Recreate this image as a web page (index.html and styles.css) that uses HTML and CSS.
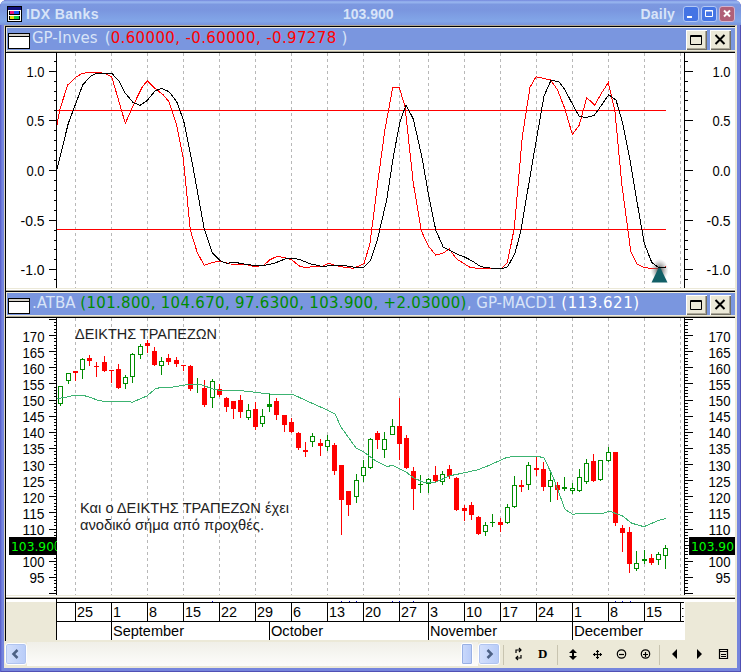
FILE: index.html
```
<!DOCTYPE html>
<html lang="el">
<head>
  <meta charset="UTF-8" />
  <title>IDX Banks</title>
  <link rel="stylesheet" href="styles.css">
</head>
<body>

  <div class="window">
    <header class="titlebar">
      <svg class="app-icon" width="15" height="16" viewBox="0 0 15 16" shape-rendering="crispEdges">
        <path d="M0 0h15v16H0z" fill="#000" />
        <path d="M1 1h13v3H1z" fill="#10107c" />
        <path d="M1 4h13v11H1z" fill="#fff" />
        <path d="M2 5h11v4H2zM2 10h11v4H2z" fill="#000" />
        <path d="M3 5h4v3H3z" fill="#e8107c" />
        <path d="M7 5h5v3H7z" fill="#1a50f0" />
        <path d="M3 10h4v3H3z" fill="#e8e010" />
        <path d="M7 10h5v3H7z" fill="#10d040" />
      </svg>
      <span class="title-name">IDX Banks</span>
      <span class="title-price">103.900</span>
      <span class="title-period">Daily</span>
      <div class="title-buttons">
        <svg width="16" height="16"><rect x=".5" y=".5" width="15" height="15" rx="2.5" /><path d="M4 11h5" stroke-width="2" /></svg>
        <svg width="16" height="16"><rect x=".5" y=".5" width="15" height="15" rx="2.5" /><path d="M4.5 4.5h7v6h-7zM4 5h8" /></svg>
        <svg class="btn-close" width="16" height="16"><rect x=".5" y=".5" width="15" height="15" rx="2.5" /><path d="M5 4.5l6 6M11 4.5l-6 6" stroke-width="2" /></svg>
      </div>
    </header>

    <main class="inner">
      <div class="pane-head">
        <i class="pane-icon"></i>
        <span class="pane-title t1"><span class="w68">GP-Inves</span> (<b class="red">0.60000, -0.60000, -0.97278</b> )</span>
        <div class="pane-buttons">
          <svg width="21" height="20"><path d="M4.5 5.5h11v9h-11zM4 6.5h12" /></svg>
          <svg width="21" height="20"><path d="M5.500 5l9 9M14.500 5l-9 9" stroke-width="2" /></svg>
        </div>
      </div>
      <svg id="oscillator" class="plot" width="729" height="235" viewBox="6 53 729 235"></svg>
      <div class="splitter"></div>

      <div class="pane-head">
        <i class="pane-icon"></i>
        <span class="pane-title t2">.ATBA <b class="green">(101.800, 104.670, 97.6300, 103.900, +2.03000)</b>, <span class="macd">GP-MACD1 <b class="white">(113.621)</b></span></span>
        <div class="pane-buttons">
          <svg width="21" height="20"><path d="M4.5 5.5h11v9h-11zM4 6.5h12" /></svg>
          <svg width="21" height="20"><path d="M5.500 5l9 9M14.500 5l-9 9" stroke-width="2" /></svg>
        </div>
      </div>
      <svg id="price" class="plot" width="729" height="277" viewBox="6 318 729 277"></svg>
      <div class="splitter"></div>

      <svg id="dates" class="dates" width="729" height="42" viewBox="6 599 729 42"></svg>
    </main>

    <footer class="toolbar">
      <svg class="scroll-btn" width="22" height="22"><path d="M11.500 6l-4 4 4 4" /></svg>
      <div class="track"><i class="thumb"></i></div>
      <svg class="scroll-btn" width="22" height="22"><path d="M8.500 6l4 4-4 4" /></svg>
      <svg class="tools" width="237" height="26" viewBox="500 641 237 26">
        <path class="sep" d="M503.500 645v20M557.500 645v20M659.500 645v20" />
        <path class="line" d="M516 653v-3h5M519 648l2 2-2 2M521 655v3h-5M518 656l-2 2 2 2" />
        <text x="538" y="658">D</text>
        <path d="M573 649l4 4h-3v3h3l-4 4-4-4h3v-3h-3z" />
        <path class="line" d="M593 654.500h9M597.500 650v9M596 651.500h3M596 657.500h3M594.500 653v3M600.500 653v3" />
        <circle class="line" cx="621.500" cy="654" r="4.200" /><path class="line" d="M619 654.500h5" />
        <circle class="line" cx="645.500" cy="654" r="4.200" /><path class="line" d="M643 654.500h5M645.500 652v5" />
        <path d="M677 649v10l-5-5zM697 649v10l5-5z" />
        <path class="line" d="M719.500 649.500h8v9h-8zM719 651.500h9M721 654.500h5M721 656.500h5" />
      </svg>
    </footer>
  </div>

  <script src="chart.js"></script>
</body>
</html>
```
FILE: styles.css
```
* {
  margin: 0;
  padding: 0;
  box-sizing: border-box;
}

body {
  background: #fff;
  font-family: "Liberation Sans", Arial, sans-serif;
  overflow: hidden;
}

svg {
  display: block;
  flex: none;
}

.window {
  width: 741px;
  height: 672px;
  display: flex;
  flex-direction: column;
  padding: 0 4px 4px;
  background: #7585dd;
  border-radius: 7px 7px 0 0;
  box-shadow: inset 1px 0 #5b62cc, inset -1px -1px #5050b4, inset 2px 0 #6b78d8;
  overflow: hidden;
}

/* title bar */
.titlebar {
  height: 25px;
  flex: none;
  display: flex;
  align-items: center;
  margin: 0 -4px;
  padding: 3px 6px 0 7px;
  background: linear-gradient(#7386dc 0, #9ab8f0 8%, #7c98e0 18%, #7a96df 40%, #82a6e8 85%, #7a94dc 100%);
  color: #d8e4f8;
  font-size: 14px;
  font-weight: bold;
}

.title-name {
  width: 312px;
  margin-left: 4px;
  letter-spacing: .4px;
}

.title-price {
  flex: 1;
  margin-left: 5px;
}

.title-period {
  margin-right: 8px;
  letter-spacing: .2px;
}

.title-buttons {
  display: flex;
  gap: 2px;
}

.title-buttons rect {
  fill: #4474e4;
  stroke: #b4c8f4;
}

.title-buttons path {
  fill: none;
  stroke: #fff;
}

.title-buttons .btn-close rect {
  fill: #b06078;
  stroke: #d0b4d0;
}

/* chart area */
.inner {
  height: 616px;
  flex: none;
  border-top: 1px solid #aca899;
  border-left: 1px solid #d8d4c4;
  border-right: 2px solid #ece9d8;
  padding-left: 1px;
  background: #000;
}

.pane-head {
  height: 27px;
  display: flex;
  align-items: center;
  border-top: 1px solid #000;
  border-bottom: 1px solid #000;
  padding: 0 4px 0 1px;
  background: #7a96df;
  box-shadow: inset 0 1px #ece9d8, inset 1px 0 #ece9d8, inset 0 -1px #aca899, inset 0 -2px #ece9d8;
}

.pane-icon {
  width: 22px;
  height: 16px;
  flex: none;
  margin: 3px 2px 0 1px;
  border: 1px solid #000;
  background: linear-gradient(#d4d0c8 2px, #000 2px, #000 3px, #fff 3px);
}

.pane-title {
  flex: 1;
  font-family: "DejaVu Sans", Verdana, sans-serif;
  font-size: 15px;
  line-height: 20px;
  padding-bottom: 3px;
  white-space: nowrap;
  color: #d8e4f8;
}

.pane-title b {
  font-weight: normal;
}

.w68 {
  display: inline-block;
  width: 68px;
}

.t1 .red {
  color: #f00;
  letter-spacing: .37px;
}

.t2 .green {
  color: #008c00;
  letter-spacing: .3px;
}

.t2 .white {
  color: #fff;
  letter-spacing: .5px;
}

.pane-buttons {
  display: flex;
  gap: 3px;
}

.pane-buttons svg {
  background: #ece9d8;
  box-shadow: inset 1px 1px #fff, inset -1px -1px #716f64, inset -2px -2px #aca899;
}

.pane-buttons path {
  fill: none;
  stroke: #000;
}

.plot {
  background: #fff;
}

.splitter {
  height: 3px;
  background: linear-gradient(#ece9d8 1px, #fff 1px, #fff 2px, #aca899 2px);
}

.inner > .splitter:last-of-type {
  height: 4px;
  border-bottom: 1px solid #000;
}

/* svg drawing */
.axis,
.grid,
.osc,
.signal,
.level,
.ma,
.candle {
  fill: none;
  stroke-width: 1;
  shape-rendering: crispEdges;
}

.axis {
  stroke: #000;
}

.grid {
  stroke: #b8b8b8;
  stroke-dasharray: 3 3;
}

.osc,
.level {
  stroke: #f00;
}

.signal {
  stroke: #000;
}

.ma {
  stroke: #3cb371;
}

.candle.up {
  stroke: #008c00;
  fill: #fff;
}

.candle.down {
  stroke: #f00;
  fill: #f00;
}

.candle.flat {
  fill: #008c00;
}

.plot text,
.dates text {
  font-size: 15px;
  fill: #000;
}

.plot .note {
  font-size: 14px;
  fill: #222;
}

.plot .last {
  font-family: "DejaVu Sans", Verdana, sans-serif;
  font-size: 13px;
  fill: #0f0;
}

/* bottom toolbar */
.toolbar {
  height: 27px;
  flex: none;
  display: flex;
  align-items: center;
  padding: 0 0 1px 1px;
  background: #ece9d8;
}

.scroll-btn {
  border: 1px solid #fff;
  border-radius: 3px;
  background: linear-gradient(90deg, #d4e0fc, #b8ccf8);
  box-shadow: inset 0 0 0 1px #b0c4f0;
}

.scroll-btn path {
  fill: none;
  stroke: #4d6185;
  stroke-width: 2.5;
}

.track {
  flex: 1;
  height: 24px;
  display: flex;
  justify-content: flex-end;
  align-items: center;
  padding-right: 5px;
  background: linear-gradient(#f0efe8, #fdfdfb);
}

.thumb {
  width: 12px;
  height: 22px;
  border: 1px solid #fff;
  border-radius: 2px;
  background: linear-gradient(90deg, #cbdafc, #b6caf8);
  box-shadow: inset 0 0 0 1px #98b0e4;
}

.tools text {
  font-family: "Liberation Serif", serif;
  font-size: 13px;
  font-weight: bold;
}

.tools .line {
  fill: none;
  stroke: #000;
  stroke-width: 1.2;
}

.tools .sep {
  stroke: #c8c4b0;
}
```
FILE: chart.js
```
const NS = 'http://www.w3.org/2000/svg';

function add(svg, tag, attrs, text) {
  const el = document.createElementNS(NS, tag);
  for (const key in attrs) el.setAttribute(key, attrs[key]);
  if (text !== undefined) el.textContent = text;
  svg.appendChild(el);
  return el;
}

// text stretched to a fixed width
function label(svg, x, y, width, text, cls) {
  const attrs = { x, y, textLength: width, lengthAdjust: 'spacingAndGlyphs' };
  if (cls) attrs.class = cls;
  add(svg, 'text', attrs, text);
}

const oscillator = document.getElementById('oscillator');
const price = document.getElementById('price');
const dates = document.getElementById('dates');

const weeks = [
  [75, '25'], [111, '1'], [147, '8'], [183, '15'], [219, '22'], [255, '29'],
  [291, '6'], [327, '13'], [363, '20'], [399, '27'], [428, '3'], [464, '10'],
  [500, '17'], [536, '24'], [572, '1'], [608, '8'], [644, '15'], [680, '2']
];
const months = [[111, 'September', 71], [269, 'October', 52], [428, 'November', 67], [572, 'December', 69]];

function frame(svg, top, bottom) {
  weeks.forEach(([x]) => add(svg, 'path', { class: 'grid', d: `M${x + .5} ${top}V${bottom}` }));
  add(svg, 'path', { class: 'axis', d: `M56.5 ${top}V${bottom}M684.5 ${top}V${bottom}` });
}

function tick(svg, y, len) {
  y = Math.round(y) + .5;
  add(svg, 'path', { class: 'axis', d: `M${57 - len} ${y}H57M684 ${y}h${len + 1}` });
}

// ---- oscillator ----
frame(oscillator, 53, 288);
for (let i = -11; i <= 11; i++) {
  tick(oscillator, 170 - i * 9.93, i % 5 ? 3 : 8);
}
['1.0', '0.5', '0.0', '-0.5', '-1.0'].forEach((text, i) => {
  const w = text.length > 3 ? 24 : 18;
  const y = 76.5 + i * 49.7;
  label(oscillator, 44.5 - w, y, w, text);
  label(oscillator, 730.5 - w, y, w, text);
});
add(oscillator, 'path', { class: 'level', d: 'M57 110.5H666M57 229.5H666' });

add(oscillator, 'polyline', { class: 'osc', points:
  '57,124.7 60,109 67.7,85 76,77 81.7,73.7 88.3,72.3 99.3,72.3 106,74 111.7,76.7 125.3,123.3 135,101.7 ' +
  '141.7,88 147.3,80.7 154,87.7 162.7,94.3 169,101.7 176.7,125 183.3,158.3 190.3,230 197.3,252.7 204.3,265.3 ' +
  '211.7,262.7 220,261 230,264 245,264.3 255,266.7 264,265 270,259.7 277.3,256.3 285,257.7 291.7,260 300,266.3 ' +
  '306.7,267.7 315,266 322.7,266 328.3,263.3 340,266.7 353.3,268.3 364,263.7 370,243.3 378.3,178.3 385,129.3 ' +
  '392.7,87.5 399.3,87.5 405,106.7 413.3,183.3 421.3,230.7 428.3,246 435.7,255 442.7,253.3 449.3,249 456.7,259 ' +
  '470,267.3 476.7,268.3 490,268.3 501.7,268.3 507.3,262.7 514.3,228.3 522.3,136.7 530,87.3 536,76.7 550.7,80 ' +
  '557.7,90.3 564.7,108.3 572.3,134.3 579.3,125 586.7,97.7 594.7,105 601.7,92.7 608.3,82.7 615,111.7 621.7,183.3 ' +
  '630.7,251 636.7,263.7 644,267.7 656.7,268.7 666,266.7' });

// up arrow on the last bar
const defs = add(oscillator, 'defs', {});
const glow = add(defs, 'radialGradient', { id: 'glow' });
add(glow, 'stop', { offset: '20%', 'stop-color': '#555', 'stop-opacity': .8 });
add(glow, 'stop', { offset: '100%', 'stop-color': '#999', 'stop-opacity': 0 });
add(oscillator, 'ellipse', { cx: 659.5, cy: 270, rx: 9, ry: 11, fill: 'url(#glow)' });
add(oscillator, 'path', { d: 'M659.5 266l8 16.500h-16z', fill: '#125f66' });

add(oscillator, 'polyline', { class: 'signal', points:
  '57,169 68.3,123.3 82.7,85 90,76.7 96.7,73.3 111.7,73.3 119,81 125.3,93.3 133.3,102.7 140,105.3 146.7,101 ' +
  '155,91 161.7,88.3 169,91.7 176.7,101.7 183.7,121 191.7,160 204.3,229.3 212.3,252.7 220,260.7 226.7,263.3 ' +
  '235,262.3 240,263.3 255,265.7 265,265.3 275,263 285,259 293.3,258.3 300,259.7 310,263.7 321.7,266.3 ' +
  '331.7,265.7 343.3,265.3 355,267.3 364,267.3 370.7,260 377.3,240 386.7,200 393.3,156.7 400,121.7 406,105 ' +
  '413.3,119 421.7,156 428.3,193.3 435.7,230 443.3,247.3 458.3,254.7 464,256.7 471.7,260.7 480.7,266.7 490,268 ' +
  '503.3,268.3 507.7,266.7 515,253.3 521,230 531.7,166.7 544,96 551,80.3 559,81.7 565,90 573.3,105.7 579.3,116.7 ' +
  '586.7,117.3 594.3,115.3 601.7,105 608.7,94.7 616,100 622.3,121.7 630,160 636.7,200 644.3,243.3 651.7,262.3 ' +
  '658.3,267.3 666,267.3' });

// ---- price ----
frame(price, 318, 595);
for (let v = 90; v <= 175; v++) {
  tick(price, 335 + (170 - v) * 3.225, v % 5 ? 3 : 8);
}
for (let v = 95; v <= 170; v += 5) {
  if (v === 105) continue;
  const w = v < 100 ? 15 : 22;
  const y = 341.5 + (170 - v) * 3.225;
  label(price, 44.5 - w, y, w, v);
  label(price, 730.5 - w, y, w, v);
}

// high, body top, body bottom, low, 1 = up, 2 = up with a filled body
const candles = [
  [386, 386, 403, 405, 1], [373, 373, 380, 383, 1], [371, 371, 373, 380], [358, 359, 369, 378, 1], [355, 358, 361, 365],
  [362, 366, 366, 376], [356, 362, 371, 371], [370, 370, 370, 382], [364, 369, 388, 388], [375, 377, 383, 388, 1],
  [353, 354, 376, 382, 1], [344, 346, 354, 358, 1], [340, 343, 346, 352], [347, 351, 365, 365], [357, 361, 365, 374, 1],
  [354, 358, 362, 364], [357, 360, 364, 366], [365, 365, 365, 370], [365, 366, 389, 390], [378, 384, 384, 392, 1],
  [380, 388, 405, 406], [379, 381, 397, 407, 1], [384, 389, 395, 396], [397, 398, 407, 411], [401, 401, 409, 418],
  [395, 400, 412, 417], [404, 410, 417, 419, 1], [402, 409, 427, 429], [409, 416, 423, 426, 1], [393, 404, 406, 411, 2],
  [398, 401, 415, 419], [415, 415, 425, 431], [418, 422, 432, 432], [432, 433, 448, 449], [442, 450, 452, 456],
  [433, 436, 441, 446, 1], [439, 443, 446, 455], [435, 440, 446, 450, 1], [443, 445, 471, 474], [465, 465, 500, 534],
  [491, 491, 505, 515], [474, 480, 496, 502, 1], [460, 467, 475, 481, 1], [438, 439, 467, 468, 1], [431, 433, 440, 448],
  [432, 439, 449, 457, 1], [419, 426, 434, 434, 1], [398, 426, 444, 459], [435, 438, 468, 468], [467, 471, 489, 509],
  [475, 484, 484, 492, 1], [478, 479, 483, 492, 1], [466, 475, 481, 482], [471, 474, 481, 484, 1], [465, 469, 476, 478],
  [477, 478, 510, 510], [505, 508, 511, 520], [502, 505, 515, 519], [516, 517, 534, 534], [522, 525, 531, 535, 1],
  [514, 522, 522, 526, 1], [518, 522, 525, 531], [504, 507, 522, 523, 1], [476, 485, 506, 507, 1], [480, 485, 487, 491],
  [462, 465, 484, 489, 1], [457, 468, 470, 475], [462, 469, 487, 490], [473, 480, 486, 501, 1], [482, 485, 490, 499],
  [477, 487, 488, 490, 2], [483, 488, 490, 493, 1], [469, 477, 490, 491, 1], [459, 463, 481, 483, 1], [454, 461, 481, 481],
  [460, 460, 479, 480, 1], [447, 452, 460, 461, 1], [452, 452, 523, 525], [525, 528, 533, 551], [527, 532, 564, 572],
  [551, 563, 568, 570, 1], [550, 559, 560, 563, 2], [554, 558, 563, 564], [552, 554, 559, 564, 1], [545, 548, 555, 568, 1]
];

candles.forEach(([high, top, bottom, low, up], i) => {
  const x = Math.round(60.4 + i * 7.2) + .5;
  const cls = 'candle ' + (up ? 'up' : 'down') + (up === 2 ? ' flat' : '');
  add(price, 'path', { class: cls, d: `M${x} ${high}V${low + 1}` });
  if (bottom - top < 1) {
    add(price, 'path', { class: cls, d: `M${x - 2.5} ${top + .5}h5` });
  } else {
    const height = up ? bottom - top : bottom - top - 1;
    add(price, 'rect', { class: cls, x: x - 2, y: top + .5, width: 4, height });
  }
});

add(price, 'polyline', { class: 'ma', points:
  '57,398.5 65,397.5 74,395.3 83,395.3 90,397.3 97,400 103,401.3 128,401.3 132,402.3 147,396 155,389 162,387 ' +
  '173,387 187,384.6 200,384.3 213,389 223,391 240,390.5 270,394 292,394 307,401 325,409 335,414 341,427 356,448 ' +
  '363,451.5 376,461 387,466.5 393,465.3 406,472 414,478 425,483 435,482.3 450,475.7 460,473.7 478,469.7 490,465 ' +
  '507,457.3 520,456 530,456.7 538,456.3 544,458 553,476.7 565,509.3 572.7,514.3 582,513.3 602,514 609,511 ' +
  '622,515.7 632,523.3 644,526.7 657,521 666,518.3' });

label(price, 75, 339, 142, 'ΔΕΙΚΤΗΣ ΤΡΑΠΕΖΩΝ', 'note');
label(price, 80, 513, 209, 'Και ο ΔΕΙΚΤΗΣ ΤΡΑΠΕΖΩΝ έχει', 'note');
label(price, 80, 530, 184, 'ανοδικό σήμα από προχθές.', 'note');

// last price boxes
add(price, 'rect', { x: 9, y: 537, width: 48, height: 18 });
add(price, 'rect', { x: 689, y: 537, width: 46, height: 18 });
label(price, 11, 551, 43, '103.90', 'last');
add(price, 'path', { d: 'M57 541.500h-1q-1 1-1 4.500t1 4.500h1', fill: 'none', stroke: '#0f0' });
label(price, 691, 551, 43, '103.90', 'last');

// ---- dates ----
add(dates, 'rect', { x: 6, y: 599, width: 729, height: 42, fill: '#ece9d8' });
add(dates, 'rect', { x: 6, y: 599, width: 729, height: 3, fill: '#fff' });
add(dates, 'rect', { x: 56, y: 599, width: 628, height: 41, fill: '#fff' });
add(dates, 'path', { class: 'axis', d: 'M56 602.5H684M56 621.5H684M56.5 599V640' });
add(dates, 'path', { d: 'M684.500 602V640', stroke: '#fff' });
weeks.forEach(([x, text]) => {
  add(dates, 'path', { class: 'axis', d: `M${x + .5} 603V621` });
  if (x === 680) {
    add(dates, 'path', { d: 'M682 608.500h1.500M682 616.500h1.500', stroke: '#000' });
  } else {
    label(dates, x + 2, 617, text.length > 1 ? 16 : 8, text);
  }
});
months.forEach(([x, text, width]) => {
  add(dates, 'path', { class: 'axis', d: `M${x + .5} 621V640` });
  label(dates, x + 2, 636, width, text);
});
[341, 349, 356, 392, 399, 413, 212, 615, 622, 630].forEach(x => {
  add(dates, 'rect', { x, y: 601, width: 1, height: 1, fill: '#00c' });
});
```
